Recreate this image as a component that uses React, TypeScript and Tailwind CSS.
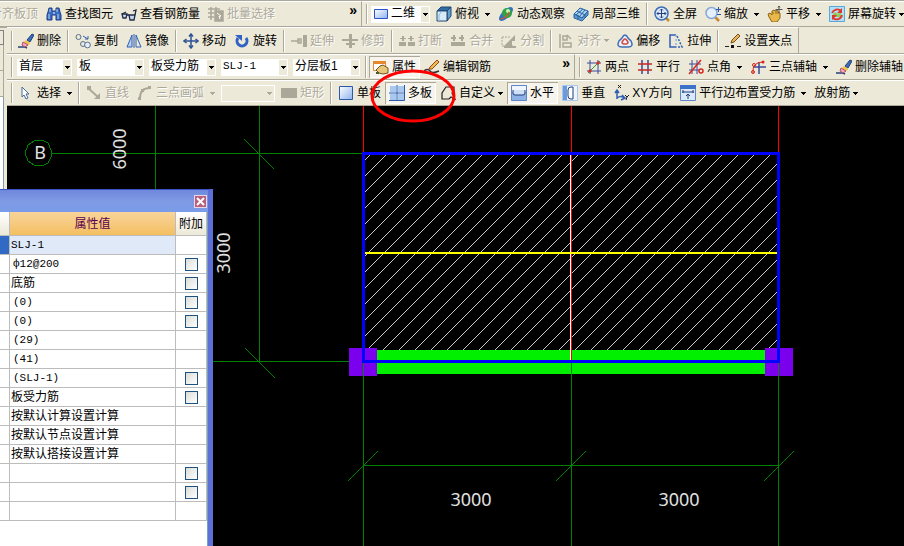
import { useState, type ReactNode } from "react";
import clsx from "clsx";

const ICONS: Record<string, ReactNode> = {
  find: (
    <>
      <path d="M3 2h3v3h4V2h3l1 4 1 3v5h-5V9H6v5H1V9l1-3z" fill="#3b6cc0" stroke="#1d3f86" />
      <path d="M3 8v5M12 8v5M4 3v3M11 3v3" stroke="#b9d2f5" />
      <path d="M7 6h2v2H7z" fill="#8fb2ea" />
    </>
  ),
  glasses: (
    <g fill="none" stroke="#222b44" strokeWidth="1.3">
      <path d="M1 8h5l-1 4H2zM8 9h6l-1 5H9z" fill="#c4daf6" />
      <path d="M6 9h2M14 9l1-5-3 1M1 8l4-2" />
    </g>
  ),
  batch: (
    <g fill="none" stroke="#aca899" strokeWidth="1.5">
      <path d="M0 3h12M0 7h6M0 11h6M3 1v13M8 1v4" />
      <path d="M7 5h8v10H7z" fill="#aca899" />
      <path d="M9 7l4 3-2 .5 1 2.5" stroke="#fff" strokeWidth="1" />
    </g>
  ),
  plane: <path d="M1.5 3.5h13v9h-13z" fill="url(#sheet)" stroke="#2a55c8" />,
  cube: (
    <g stroke="#23476e" strokeLinejoin="round">
      <path d="M1 5l4-4h10l-4 4z" fill="#2f6ea5" />
      <path d="M11 5l4-4v9l-4 5z" fill="#5f9fcf" />
      <path d="M1 5h10v10H1z" fill="#d8ebf8" />
      <path d="M3 15V9l3-4" fill="none" stroke="#8db8da" />
    </g>
  ),
  orbit: (
    <>
      <ellipse cx="8" cy="8" rx="9" ry="4" transform="rotate(-45 8 8)" fill="#2d72c4" />
      <circle cx="9" cy="7" r="5" fill="#2fa24a" />
      <circle cx="10" cy="5" r="2" fill="#c9f5b4" />
      <path d="M2 13c4 0 8-3 9-7" stroke="#e3502f" strokeWidth="1.2" fill="none" />
    </>
  ),
  local3d: (
    <g stroke="#2a62a0" fill="#a9d2f2">
      <path d="M1 8l6-6 8 3-6 7z" />
      <path d="M1 8v4l8 3 6-6V5l-6 7z" fill="#5c9bd6" />
      <path d="M4 5l8 4M3 9l7-6M6 11l6-7M5 9v4M12 9v3" fill="none" />
    </g>
  ),
  fullscreen: (
    <>
      <path d="M12 12l3 3" stroke="#c9882e" strokeWidth="2.5" />
      <circle cx="7.5" cy="7.5" r="6.5" fill="#dbe9fb" stroke="#3f6fb5" strokeWidth="1.5" />
      <path d="M7.5 3v9M3 7.5h9M6 4.5L7.5 3 9 4.5M6 10.5L7.5 12 9 10.5M4.5 6L3 7.5 4.5 9M10.5 6L12 7.5 10.5 9" fill="none" stroke="#23417e" />
    </>
  ),
  zoom: (
    <>
      <path d="M10 11l4 4" stroke="#c9882e" strokeWidth="2.5" />
      <circle cx="6.5" cy="7" r="5.5" fill="#e5f0fc" stroke="#86a8d8" strokeWidth="1.5" />
      <path d="M13.5 1v5M11 3.5h5M12 8.5h4" stroke="#2d56a0" fill="none" />
    </>
  ),
  pan: (
    <>
      <path d="M1 8l2-1 2 2V5l2-1 1 1 2-1 1 2 2 1v5l-3 4H5l-3-5z" fill="#e8b84a" stroke="#8f6516" />
      <path d="M6 8V6M9 8V5M11 8V6" stroke="#8f6516" />
      <path d="M12 0v7M8.5 3.5h7M11 1.5L12 0l1 1.5" stroke="#555" fill="none" />
    </>
  ),
  screenRotate: (
    <>
      <path d="M.5 .5h15v15H.5z" fill="#b4def6" stroke="#58a8d8" />
      <path d="M4 11V8l2-2 3 2 3-2v5z" fill="#8fcc5a" />
      <path d="M3 7a5.500 5.500 0 019-2M13 9a5.500 5.500 0 01-9 3" fill="none" stroke="#e0352b" strokeWidth="1.8" />
      <path d="M13 2v5H8zM3 14V9h5z" fill="#e0352b" />
    </>
  ),
  erase: (
    <>
      <path d="M0 14h7l2 1" stroke="#23417e" fill="none" strokeWidth="1.5" />
      <path d="M9 7l5-6 2 1-4 7z" fill="#3c6cb8" stroke="#23417e" />
      <path d="M8 7l4 3-1 2-5-3z" fill="#f0c040" />
      <path d="M5 9l5 3-3 2-3-2z" fill="#f5a8b8" stroke="#b05068" />
    </>
  ),
  copy: (
    <g fill="none" stroke="#5b6f92">
      <circle cx="3.5" cy="4" r="2.5" />
      <circle cx="8" cy="11" r="2.5" />
      <circle cx="12.5" cy="12" r="2.9" fill="#e4edf8" />
      <path d="M8 3l5 3M13 3v3h-3" stroke="#3366aa" />
    </g>
  ),
  mirror: (
    <g fill="none" stroke="#2f5fb3">
      <path d="M6 2v12H1z" fill="#b8d0f2" />
      <path d="M10 2v12h5z" />
      <path d="M8 1v14" />
    </g>
  ),
  move: (
    <g fill="none" stroke="#2c5294" strokeWidth="1.5">
      <path d="M8 1v14M1 8h14" />
      <path d="M6 3.5L8 1l2 2.5M6 12.5L8 15l2-2.5M3.5 6L1 8l2.5 2M12.5 6L15 8l-2.5 2" />
    </g>
  ),
  rotate: (
    <>
      <path d="M4 5a5 5 0 108 0" fill="none" stroke="#2f62c4" strokeWidth="3" />
      <path d="M1 2h7v6z" fill="#2f62c4" />
    </>
  ),
  extend: (
    <g fill="none" stroke="#aca899" strokeWidth="1.5">
      <path d="M0 8h9M7 6h3v4H7z" />
      <path d="M12 2h4v12h-4z" fill="#aca899" stroke="none" />
    </g>
  ),
  trim: <path d="M7 1h3v5h6v2h-6v2h3v2h-3v3H7v-3H4v-2h3V8H0V6h7z" fill="#aca899" />,
  breakAt: <path d="M0 9h7v4H0zM9 9h7v4H9zM1 5h6v1H1zM3 3h2v5H3zM9 5h6v1H9zM11 3h2v5h-2z" fill="#aca899" />,
  merge: <path d="M1 9h14v4H1zM1 4h5v2H1zM3 2h2v6H3zM9 4h5v2H9zM11 2h2v6h-2z" fill="#aca899" />,
  split: (
    <>
      <path d="M1 4h9M1 4v9h11" stroke="#aca899" fill="none" strokeDasharray="2 1" />
      <path d="M3 13l11-11v6h-3v5h4v2H3z" fill="#aca899" />
    </>
  ),
  align: (
    <g fill="none" stroke="#aca899" strokeWidth="1.5">
      <path d="M2 1v14M5 3h4v4H5zM5 10h8v4H5z" />
      <path d="M9 2l4 4" />
    </g>
  ),
  offset: (
    <g fill="none" strokeWidth="1.5">
      <path d="M5 5q3-6 6 0l3 3q3 6-3 6H5q-6 0-3-6z" stroke="#3c6cb8" fill="#eaf2fc" />
      <path d="M6.5 7q1.5-2 3 0l1.5 2q0 2-2 2H7q-2 0-2-2z" stroke="#d8483c" />
    </g>
  ),
  stretch: (
    <g fill="none" stroke="#2f5fb3" strokeWidth="1.5">
      <path d="M8 2H2v12h6" />
      <path d="M9 3l5 11H8" strokeDasharray="2 1.5" />
      <path d="M8 2v12" stroke="#8fb2ea" strokeDasharray="2 2" />
    </g>
  ),
  grip: (
    <>
      <path d="M0 13.5h4M12 13.5h4" stroke="#222" />
      <path d="M6 12h3v3H6z" fill="#111" />
      <path d="M6 10l1-3 6-6 2 2-6 6z" fill="#e6b45c" stroke="#7c4d14" />
    </>
  ),
  props: (
    <>
      <path d="M.5 2.5h12v9H.5z" fill="#fff" stroke="#e08a2c" />
      <path d="M0 2h13v3H0z" fill="#e8882c" />
      <path d="M3 11l4-4 3-1 5 3v5l-5 1-4-1z" fill="#e8c77c" stroke="#6c5420" />
      <path d="M3 13h3v2H3z" fill="#4a5a30" />
    </>
  ),
  editBar: (
    <>
      <path d="M0 12q4-3 6 0t9 0" fill="none" stroke="#333" strokeWidth="1.5" />
      <path d="M5 10l1-2 7-7 2 2-7 7z" fill="#e8c050" stroke="#a04018" />
    </>
  ),
  twoPoint: (
    <g fill="none">
      <path d="M4 1v14M12 1v14M1 4h14M1 12h14" stroke="#3a4a9c" />
      <path d="M2 14L14 2" stroke="#2a9c3a" />
      <path d="M3 11h2v2H3zM11 3h2v2h-2z" fill="#d8261c" stroke="#d8261c" />
    </g>
  ),
  parallel: (
    <g fill="none">
      <path d="M5 1v14M11 1v14" stroke="#3a4a9c" strokeWidth="1.5" />
      <path d="M1 5h14M1 11h14" stroke="#c8281e" strokeWidth="1.5" />
    </g>
  ),
  pointAngle: (
    <g fill="none">
      <path d="M4 1v14M9 1v14M1 5h12M1 11h10" stroke="#3a4a9c" />
      <path d="M1 15L13 1" stroke="#d8261c" strokeWidth="1.5" />
      <circle cx="13" cy="12" r="2" stroke="#d8261c" strokeWidth="1.5" />
    </g>
  ),
  threePoint: (
    <g fill="none">
      <path d="M9 3v12M3 8h13" stroke="#3a4a9c" strokeWidth="1.5" />
      <path d="M3 14Q2 3 13 3" stroke="#d8261c" />
      <circle cx="3" cy="13" r="1.5" stroke="#d8261c" />
      <circle cx="4" cy="6" r="1.5" stroke="#d8261c" />
      <circle cx="13" cy="3" r="1.5" fill="#d8261c" />
    </g>
  ),
  cursor: <path d="M4 2l7 7H8l2 4-2 1-2-4-2 2z" fill="#fff" stroke="#4a6a9c" />,
  line: (
    <>
      <path d="M2 3l10 9" stroke="#aca899" strokeWidth="2" />
      <path d="M1 1h4v4H1zM14 14H8l6-6z" fill="#aca899" />
    </>
  ),
  arc: (
    <>
      <path d="M3 13Q3 3 13 3" fill="none" stroke="#aca899" strokeWidth="2" />
      <path d="M1 12h3v3H1zM11 1h3v3h-3zM4 4h3v3H4z" fill="#aca899" />
    </>
  ),
  rect: <path d="M0 3h16v10H0z" fill="#aca899" />,
  single: <path d="M1.5 1.5h13v13h-13z" fill="url(#sheet)" stroke="#2c5aa8" />,
  multi: (
    <>
      <path d="M0 0h16v16H0z" fill="#eef5fd" />
      <path d="M1 1h6v6H1zM9 1h6v6H9zM1 9h6v6H1zM9 9h6v6H9z" fill="#a9c8f0" />
      <path d="M8 0v16M0 8h16M15.5 0v15.5H0" stroke="#2c5aa8" fill="none" />
    </>
  ),
  custom: <path d="M2 14V8l4-6h8v4l-2 2 3 6-4-2-2 2z" fill="none" stroke="#222" strokeWidth="1.2" />,
  horizontal: (
    <>
      <path d="M.5 .5h15v15H.5z" fill="#8fb2e6" stroke="#5c86c8" />
      <path d="M1 1h14v6H1z" fill="#eef5fd" />
      <path d="M2 5v3q0 2 2 2h8q2 0 2-2V5" fill="#cfe0f7" stroke="#203c78" />
    </>
  ),
  vertical: (
    <>
      <path d="M.5 .5h15v15H.5z" fill="#eef5fd" stroke="#a9c6ee" />
      <path d="M1 1h4v14H1z" fill="#6c9ade" />
      <path d="M11 2H9Q6 2 6 5v6q0 3 3 3h2z" fill="#fff" stroke="#203c78" />
    </>
  ),
  xy: (
    <g fill="none">
      <path d="M4 14V6M2 8l2-3 2 3M4 13q4-3 7 0M9 10l3 3-4 2" stroke="#2f5fb3" strokeWidth="1.5" />
      <path d="M5 0l3 3M8 0L5 3M12 10l2 2 2-2M14 12l-1 3" stroke="#222" />
    </g>
  ),
  edge: (
    <>
      <path d="M.5 .5h15v15H.5z" fill="#dce9fa" stroke="#5c86c8" />
      <path d="M0 0h16v4H0z" fill="#3c72c8" />
      <path d="M2 7h12M3 5v3M13 5v3M8 14V9M6 11l2-2 2 2" fill="none" stroke="#203c78" />
    </>
  ),
};

function Icon({ name }: { name: string }) {
  return (
    <svg className="size-4 shrink-0" viewBox="0 0 16 16" aria-hidden>
      {ICONS[name]}
    </svg>
  );
}

function Caret({ className }: { className?: string }) {
  return (
    <svg className={clsx("h-[3px] w-[5px] shrink-0", className)} viewBox="0 0 5 3" shapeRendering="crispEdges" aria-hidden>
      <path d="M0 0h5L3 3H2z" fill="currentColor" />
    </svg>
  );
}

function Tool({
  icon,
  label,
  caret,
  disabled,
  pressed,
}: {
  icon?: string;
  label: string;
  caret?: "near" | "far";
  disabled?: boolean;
  pressed?: boolean;
}) {
  return (
    <button
      type="button"
      disabled={disabled}
      aria-pressed={pressed}
      className={clsx(
        "flex h-[22px] shrink-0 items-center whitespace-nowrap px-1",
        disabled && "text-[#aca899] [text-shadow:1px_1px_0_#fff]",
        pressed && "bg-[#f6f4ec] shadow-[inset_1px_1px_0_#aca899,inset_-1px_-1px_0_#fff]",
      )}
    >
      {icon && <Icon name={icon} />}
      <span className={clsx(icon && "ml-[3px]")}>{label}</span>
      {caret && <Caret className={caret === "near" ? "ml-[3px]" : "ml-1.5"} />}
    </button>
  );
}

function Combo({
  label,
  options,
  icon,
  disabled,
  className,
}: {
  label: string;
  options: string[];
  icon?: string;
  disabled?: boolean;
  className: string;
}) {
  return (
    <div
      className={clsx(
        "grid h-[17px] shrink-0 items-center *:col-start-1 *:row-start-1",
        disabled ? "border border-white text-[#aca899]" : "bg-white",
        className,
      )}
    >
      <select
        aria-label={label}
        disabled={disabled}
        className={clsx("h-[14px] w-full appearance-none self-start leading-[14px] outline-none", icon ? "pl-5" : "pl-0.5")}
      >
        {options.map((o) => (
          <option key={o}>{o}</option>
        ))}
      </select>
      {icon && (
        <span className="pointer-events-none pl-0.5">
          <Icon name={icon} />
        </span>
      )}
      <span
        className={clsx(
          "pointer-events-none mr-px flex h-[15px] w-2 items-center justify-center justify-self-end",
          !disabled && "bg-[#ece9d8]",
        )}
      >
        <Caret />
      </span>
    </div>
  );
}

const Grip = () => <span className="h-5 w-[3px] shrink-0 border-l border-[#aca899] shadow-[inset_1px_0_0_#fff]" />;

const Sep = () => (
  <span className="flex h-[22px] w-1.5 shrink-0 justify-center">
    <span className="w-0.5 border-l border-r border-l-[#aca899] border-r-white" />
  </span>
);

const More = () => (
  <button type="button" aria-label="更多" className="mb-2 ml-auto mr-1 shrink-0 text-sm leading-4 font-bold">
    »
  </button>
);

const BAR = "flex items-center border-t border-b border-t-white border-b-[#aca899] pl-1";

function Toolbars() {
  return (
    <div className="overflow-hidden bg-[#ece9d8]">
      <div className="flex h-[27px] border-t border-[#aca899]">
        <div className={clsx(BAR, "w-[361px] shrink-0 overflow-hidden")}>
          <div className="-ml-[18px] flex">
            <Tool label="对齐板顶" disabled />
            <Tool icon="find" label="查找图元" />
            <Tool icon="glasses" label="查看钢筋量" />
            <Tool icon="batch" label="批量选择" disabled />
          </div>
          <More />
        </div>
        <div className={clsx(BAR, "flex-1 border-l border-l-[#aca899]")}>
          <Grip />
          <Combo label="视图" options={["二维", "三维"]} icon="plane" className="mx-0.5 w-[59px]" />
          <Tool icon="cube" label="俯视" caret="far" />
          <Tool icon="orbit" label="动态观察" />
          <Tool icon="local3d" label="局部三维" />
          <Sep />
          <Tool icon="fullscreen" label="全屏" />
          <Tool icon="zoom" label="缩放" caret="far" />
          <Tool icon="pan" label="平移" caret="far" />
          <Tool icon="screenRotate" label="屏幕旋转" caret="near" />
        </div>
      </div>

      <div className="flex">
        <div className="flex w-[7px] shrink-0 flex-col border-t border-[#aca899]">
          <div className="mt-0.5 h-[15px] w-1 border-t border-r border-b border-[#808080]" />
          <div className="h-[26px] w-1 border-r border-b border-[#aca899]" />
          <div className="h-[26px] w-1 border-r border-b border-[#aca899]" />
          <div className="w-1 flex-1 border-r border-[#7f9db9] bg-white" />
        </div>
        <div className="min-w-0 flex-1">
          <div className="flex h-[27px] border-b border-[#aca899]">
            <div className="flex items-center border-t border-r border-t-white border-r-[#aca899] pr-0.5 pl-1">
              <Grip />
              <Tool icon="erase" label="删除" />
              <Sep />
              <Tool icon="copy" label="复制" />
              <Tool icon="mirror" label="镜像" />
              <Sep />
              <Tool icon="move" label="移动" />
              <Tool icon="rotate" label="旋转" />
              <Sep />
              <Tool icon="extend" label="延伸" disabled />
              <Tool icon="trim" label="修剪" disabled />
              <Sep />
              <Tool icon="breakAt" label="打断" disabled />
              <Tool icon="merge" label="合并" disabled />
              <Tool icon="split" label="分割" disabled />
              <Sep />
              <Tool icon="align" label="对齐" caret="near" disabled />
              <Tool icon="offset" label="偏移" />
              <Tool icon="stretch" label="拉伸" />
              <Sep />
              <Tool icon="grip" label="设置夹点" />
            </div>
          </div>

          <div className="flex h-[26px]">
            <div className={clsx(BAR, "w-[567px] shrink-0")}>
              <Grip />
              <div className="mx-[3px] flex gap-[5px]">
                <Combo label="楼层" options={["首层"]} className="w-[55px]" />
                <Combo label="构件类型" options={["板"]} className="w-[67px]" />
                <Combo label="构件" options={["板受力筋"]} className="w-[67px]" />
                <Combo
                  label="名称"
                  options={["SLJ-1"]}
                  className="w-[67px] font-['Liberation_Mono',monospace] text-[11px]"
                />
                <Combo label="分层" options={["分层板1"]} className="w-[67px]" />
              </div>
              <Sep />
              <Tool icon="props" label="属性" pressed />
              <Tool icon="editBar" label="编辑钢筋" />
              <More />
            </div>
            <div className={clsx(BAR, "flex-1 border-l border-l-[#aca899]")}>
              <Grip />
              <Tool icon="twoPoint" label="两点" />
              <Tool icon="parallel" label="平行" />
              <Tool icon="pointAngle" label="点角" caret="far" />
              <Tool icon="threePoint" label="三点辅轴" caret="far" />
              <Tool icon="erase" label="删除辅轴" />
            </div>
          </div>

          <div className={clsx(BAR, "h-[26px]")}>
            <Grip />
            <Tool icon="cursor" label="选择" caret="far" />
            <Sep />
            <Tool icon="line" label="直线" disabled />
            <Tool icon="arc" label="三点画弧" caret="far" disabled />
            <Combo label="画弧方式" options={[""]} disabled className="mx-0.5 w-[54px]" />
            <Tool icon="rect" label="矩形" disabled />
            <Sep />
            <Tool icon="single" label="单板" />
            <Tool icon="multi" label="多板" pressed />
            <Tool icon="custom" label="自定义" caret="near" />
            <Tool icon="horizontal" label="水平" pressed />
            <Tool icon="vertical" label="垂直" />
            <Tool icon="xy" label="XY方向" />
            <Tool icon="edge" label="平行边布置受力筋" caret="far" />
            <Tool label="放射筋" caret="near" />
          </div>
        </div>
      </div>
    </div>
  );
}

// hatch lines run at 45 degrees, one every 16px
const HATCH = Array.from({ length: 40 }, (_, i) => 412 + i * 16);

function Drawing() {
  return (
    <svg className="min-w-0 flex-1 bg-black" aria-label="绘图区">
      <clipPath id="slab">
        <path d="M358 49h412v195H358z" />
      </clipPath>
      <g shapeRendering="crispEdges" fill="none">
        <path d="M44 47.5h312M148.5 0v300M252.5 0v255M100 255.5h256" stroke="#008000" />
        <path d="M237 33l30 30M238 242l30 30" stroke="#008000" />
        <path d="M27 35l8-1 6 3 3 7v7l-3 6-6 3-8-1-6-4-3-8 3-8z" stroke="#008000" />
        <path d="M356.5 0v47M564.5 0v255M771.5 0v47" stroke="#f00" />
        <g clipPath="url(#slab)" stroke="#c8c8c8">
          {HATCH.map((c) => (
            <path key={c} d={`M${c} 0L${c - 260} 260`} />
          ))}
        </g>
        <path d="M370 244h388v24H370z" fill="#00f000" />
        <path d="M342 242h28v28h-28zM758 242h28v28h-28z" fill="#7b00ee" />
        <path d="M563.5 49v206" stroke="#fff" />
        <path d="M564.5 49v206" stroke="#f00" />
        <path d="M358 147h412" stroke="#ff0" strokeWidth="2" />
        <path d="M356.5 47.5h415v208h-415z" stroke="#00f" strokeWidth="3" />
        <path d="M356.5 257v400M564.5 257v400M771.5 257v400M356 359.5h416" stroke="#008000" />
        <path d="M341 375l30-30M549 375l30-30M757 375l30-30" stroke="#008000" />
      </g>
      <g fill="#e0e0e0" fontSize="18" textAnchor="middle" className="font-['Noto_Sans']">
        <text x="33" y="53">B</text>
        <text transform="translate(119 43) rotate(-90)">6000</text>
        <text transform="translate(223 147) rotate(-90)">3000</text>
        <text x="464" y="400">3000</text>
        <text x="672" y="400">3000</text>
      </g>
    </svg>
  );
}

const ROWS: { value: string; extra?: boolean }[] = [
  { value: "SLJ-1" },
  { value: "ф12@200", extra: true },
  { value: "底筋", extra: true },
  { value: "(0)", extra: true },
  { value: "(0)", extra: true },
  { value: "(29)" },
  { value: "(41)" },
  { value: "(SLJ-1)", extra: true },
  { value: "板受力筋", extra: true },
  { value: "按默认计算设置计算" },
  { value: "按默认节点设置计算" },
  { value: "按默认搭接设置计算" },
  { value: "", extra: true },
  { value: "", extra: true },
  { value: "" },
];

function PropertyWindow({ onClose }: { onClose: () => void }) {
  return (
    <section
      aria-label="属性编辑器"
      className="absolute top-[83px] bottom-0 left-0 flex w-[213px] flex-col overflow-hidden border-t border-r-[5px] border-t-[#3c50c8] border-r-[#5c70d8] bg-white"
    >
      <div className="-mr-[5px] flex h-[22px] shrink-0 items-center justify-end bg-linear-to-b from-[#6f88dc] via-[#7f9ae4] to-[#7a9ce8] pr-1.5">
        <button
          type="button"
          aria-label="关闭"
          onClick={onClose}
          className="flex size-[13px] items-center justify-center border border-[#e8d8ea] bg-[#b8607c]"
        >
          <svg className="size-[9px]" viewBox="0 0 9 9" aria-hidden>
            <path d="M1 1l7 7M8 1L1 8" stroke="#fff" strokeWidth="2" />
          </svg>
        </button>
      </div>
      <div className="flex-1 border-r border-[#7aa0c0]">
        <table className="w-full table-fixed border-separate border-spacing-0">
          <colgroup>
            <col className="w-[10px]" />
            <col />
            <col className="w-[31px]" />
          </colgroup>
          <thead>
            <tr className="h-6 *:border-r *:border-b *:border-[#bcbcbc] *:p-0 *:font-normal">
              <th className="bg-linear-to-b from-white to-[#ece9d8]" />
              <th className="bg-linear-to-b from-[#f8d49a] to-[#f4bf60] text-[#5a0050]">属性值</th>
              <th className="bg-linear-to-b from-white to-[#ece9d8]">附加</th>
            </tr>
          </thead>
          <tbody>
            {ROWS.map((row, i) => (
              <tr key={i} className="h-[19px] *:border-r *:border-b *:border-[#bcbcbc] *:p-0">
                <td className={clsx(i === 0 && "bg-[#316ac5]")} />
                <td
                  className={clsx(
                    "leading-4 whitespace-nowrap",
                    i === 0 && "bg-[#dfe9f7]",
                    /^[(ф]/.test(row.value) ? "pl-[3px]!" : "pl-px!",
                    /\d/.test(row.value) && "font-['Liberation_Mono',monospace] text-[11px]",
                  )}
                >
                  {row.value}
                </td>
                <td>
                  {row.extra && (
                    <input
                      type="checkbox"
                      aria-label={`附加 ${row.value}`}
                      className="mx-auto block size-[13px] appearance-none border border-[#1c5180] bg-linear-to-br from-[#dcdcd7] to-white checked:bg-[#21a121]"
                    />
                  )}
                </td>
              </tr>
            ))}
          </tbody>
        </table>
      </div>
    </section>
  );
}

export default function App() {
  const [showProps, setShowProps] = useState(true);

  return (
    <div className="relative flex h-screen flex-col overflow-hidden font-['Liberation_Sans','Noto_Sans_CJK_SC',sans-serif] text-xs text-black">
      <svg className="absolute size-0" aria-hidden>
        <linearGradient id="sheet" x1="0" y1="0" x2="1" y2="1">
          <stop offset="0" stopColor="#fff" />
          <stop offset="1" stopColor="#8fb2f0" />
        </linearGradient>
      </svg>
      <Toolbars />
      <main className="relative flex min-h-0 flex-1">
        <div className="w-[7px] shrink-0 border-r-[3px] border-[#ece9d8] bg-white shadow-[inset_-1px_0_0_#7f9db9]" />
        <Drawing />
        {showProps && <PropertyWindow onClose={() => setShowProps(false)} />}
      </main>
      <svg className="pointer-events-none absolute top-[69px] left-[370px] h-[54px] w-[88px]" viewBox="0 0 88 54" aria-hidden>
        <ellipse cx="43" cy="27" rx="41" ry="25" fill="none" stroke="#f00" strokeWidth="3" />
      </svg>
    </div>
  );
}
